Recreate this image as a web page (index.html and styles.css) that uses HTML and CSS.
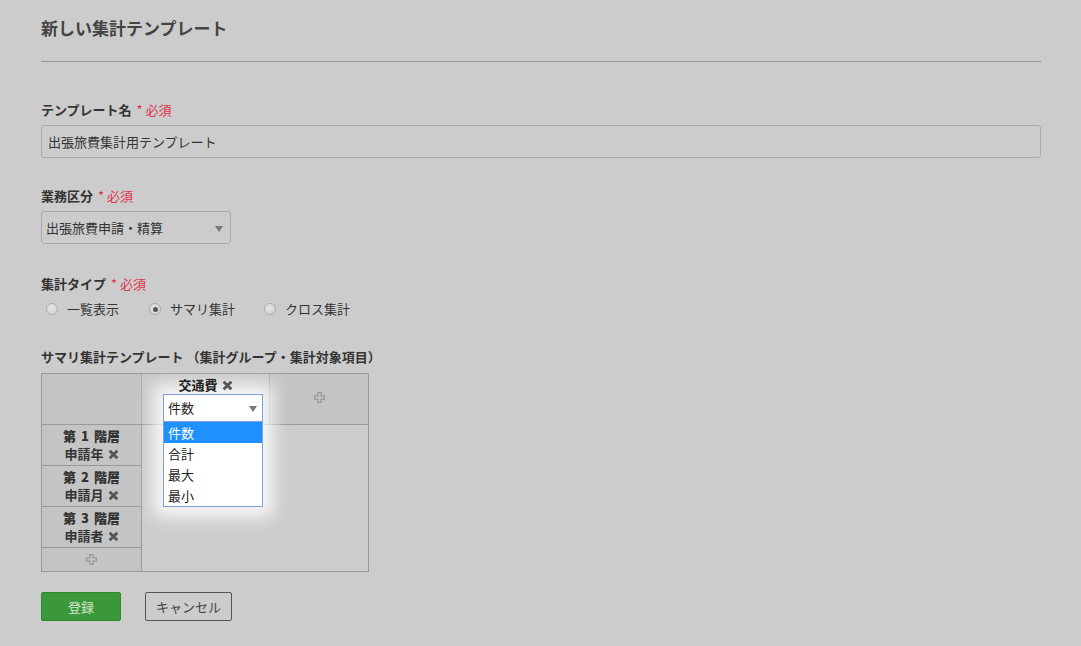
FILE: index.html
```html
<!DOCTYPE html>
<html lang="ja">
<head>
<meta charset="utf-8">
<link rel="stylesheet" href="styles.css">
</head>
<body>
<div class="page">
  <h1 class="title">新しい集計テンプレート</h1>
  <div class="rule"></div>

  <div class="field f-name">
    <div class="label">テンプレート名 <span class="req">* 必須</span></div>
    <div class="input">出張旅費集計用テンプレート</div>
  </div>

  <div class="field f-cat">
    <div class="label">業務区分 <span class="req">* 必須</span></div>
    <div class="select">出張旅費申請・精算<span class="caret"></span></div>
  </div>

  <div class="field f-type">
    <div class="label">集計タイプ <span class="req">* 必須</span></div>
    <div class="radios">
      <span class="radio r1"><span class="dot"></span>一覧表示</span>
      <span class="radio r2"><span class="dot on"></span>サマリ集計</span>
      <span class="radio r3"><span class="dot"></span>クロス集計</span>
    </div>
  </div>

  <div class="field f-grid">
    <div class="label">サマリ集計テンプレート （集計グループ・集計対象項目）</div>
    <div class="grid">
      <div class="c-corner"></div>
      <div class="c-head">
        <div class="head-name">交通費<svg class="x" viewBox="0 0 10 10"><path d="M1.5 1.5 L8.5 8.5 M8.5 1.5 L1.5 8.5"/></svg></div>
        <div class="combo">
          <div class="combo-box">件数<span class="caret"></span></div>
          <ul class="options">
            <li class="sel">件数</li>
            <li>合計</li>
            <li>最大</li>
            <li>最小</li>
          </ul>
        </div>
      </div>
      <div class="c-add"><svg class="plus" viewBox="0 0 12 12"><path d="M4.5 1.5 H7.5 V4.5 H10.5 V7.5 H7.5 V10.5 H4.5 V7.5 H1.5 V4.5 H4.5 Z"/></svg></div>
      <div class="rows">
        <div class="r-cell"><b>第 1 階層</b><span>申請年<svg class="x" viewBox="0 0 10 10"><path d="M1.5 1.5 L8.5 8.5 M8.5 1.5 L1.5 8.5"/></svg></span></div>
        <div class="r-cell"><b>第 2 階層</b><span>申請月<svg class="x" viewBox="0 0 10 10"><path d="M1.5 1.5 L8.5 8.5 M8.5 1.5 L1.5 8.5"/></svg></span></div>
        <div class="r-cell"><b>第 3 階層</b><span>申請者<svg class="x" viewBox="0 0 10 10"><path d="M1.5 1.5 L8.5 8.5 M8.5 1.5 L1.5 8.5"/></svg></span></div>
        <div class="r-add"><svg class="plus" viewBox="0 0 12 12"><path d="M4.5 1.5 H7.5 V4.5 H10.5 V7.5 H7.5 V10.5 H4.5 V7.5 H1.5 V4.5 H4.5 Z"/></svg></div>
      </div>
      <div class="body"></div>
    </div>
  </div>

  <div class="actions">
    <span class="btn btn-ok">登録</span>
    <span class="btn btn-cancel">キャンセル</span>
  </div>
</div>
</body>
</html>
```
FILE: styles.css
```css
html, body {
  margin: 0;
  padding: 0;
  background: #cccccc;
}
body {
  font-family: "Noto Sans CJK JP", "Noto Sans", sans-serif;
  font-size: 13px;
  color: #333;
}
.page {
  width: 1000px;
  padding: 16px 0 0 41px;
}
.title {
  margin: 0;
  font-size: 17px;
  line-height: 24px;
  font-weight: bold;
  color: #444;
}
.rule {
  margin-top: 21px;
  height: 1px;
  background: #999;
}
.label {
  font-weight: bold;
  line-height: 18px;
  color: #333;
}
.req {
  color: #e0314b;
  font-weight: normal;
  margin-left: 2px;
}
.f-name { margin-top: 39px; }
.input {
  margin-top: 6px;
  height: 31px;
  border: 1px solid #aaa;
  border-radius: 3px;
  box-sizing: content-box;
  padding-left: 6px;
  line-height: 31px;
  color: #333;
}
.f-cat { margin-top: 29px; }
.select {
  position: relative;
  margin-top: 6px;
  width: 184px;
  height: 31px;
  border: 1px solid #aaa;
  border-radius: 3px;
  padding-left: 4px;
  line-height: 31px;
}
.caret {
  position: absolute;
  right: 7px;
  top: 14px;
  width: 0;
  height: 0;
  border-left: 4px solid transparent;
  border-right: 4px solid transparent;
  border-top: 6px solid #777;
}
.f-type { margin-top: 31px; }
.radios {
  display: flex;
  margin-top: 7px;
  padding-left: 5px;
  line-height: 18px;
}
.radio {
  display: inline-flex;
  align-items: center;
}
.r1 { margin-right: 30px; }
.r2 { margin-right: 29px; }
.dot {
  width: 10px;
  height: 10px;
  border-radius: 50%;
  border: 1px solid #aaa;
  background: radial-gradient(circle at 40% 35%, #e4e4e4, #cfcfcf);
  margin-right: 9px;
  position: relative;
}
.dot.on::after {
  content: "";
  position: absolute;
  left: 2.5px;
  top: 2.5px;
  width: 5px;
  height: 5px;
  border-radius: 50%;
  background: #555;
}
.f-grid { margin-top: 30px; }
.grid {
  margin-top: 7px;
  display: grid;
  grid-template-columns: 100px 128px 98px;
  grid-template-rows: 51px auto;
  width: 326px;
  border: 1px solid #999;
  background: #cccccc;
}
.c-corner {
  background: #c4c4c4;
  border-right: 1px solid #aaa;
  border-bottom: 1px solid #999;
}
.c-head {
  position: relative;
  background: #c8c8c8;
  border-right: 1px solid #aaa;
  border-bottom: 1px solid #999;
  text-align: center;
}
.head-name {
  position: relative;
  z-index: 3;
  font-weight: bold;
  line-height: 18px;
  padding-top: 2px;
  color: #222;
}
.c-add {
  background: #c4c4c4;
  border-bottom: 1px solid #999;
  display: flex;
  align-items: center;
  justify-content: center;
  padding-bottom: 4px;
}
.combo {
  position: absolute;
  left: 21px;
  top: 20px;
  width: 100px;
  z-index: 2;
  box-shadow: 0 0 16px 10px rgba(255,255,255,0.85);
  text-align: left;
}
.combo-box {
  position: relative;
  height: 26px;
  background: #fff;
  border: 1px solid #7f9fd6;
  line-height: 26px;
  padding-left: 4px;
  color: #222;
}
.combo-box .caret {
  top: 11px;
  right: 5px;
}
.options {
  list-style: none;
  margin: 0;
  padding: 0;
  background: #fff;
  border: 1px solid #7f9fd6;
  border-top: none;
}
.options li {
  height: 21px;
  line-height: 21px;
  padding-left: 4px;
  color: #222;
}
.options li.sel {
  background: #1e90ff;
  color: #fff;
}
.rows {
  grid-column: 1;
  border-right: 1px solid #999;
}
.r-cell {
  height: 40px;
  border-bottom: 1px solid #999;
  background: #c4c4c4;
  display: flex;
  flex-direction: column;
  align-items: center;
  justify-content: center;
  line-height: 18px;
  font-weight: bold;
  color: #333;
}
.r-cell b {
  word-spacing: 2px;
}
.r-cell span {
  display: inline-flex;
  align-items: center;
}
.r-add {
  height: 23px;
  background: #c4c4c4;
  display: flex;
  align-items: center;
  justify-content: center;
}
.body {
  grid-column: 2 / 4;
  background: #cccccc;
}
.x {
  width: 11px;
  height: 11px;
  vertical-align: -1px;
  margin-left: 4px;
}
.x path {
  stroke: #555;
  stroke-width: 2.6;
  fill: none;
}
.plus {
  width: 13px;
  height: 13px;
}
.plus path {
  fill: none;
  stroke: #999;
  stroke-width: 1.2;
}
.actions {
  margin-top: 20px;
  display: flex;
  gap: 24px;
}
.btn {
  display: inline-flex;
  align-items: center;
  justify-content: center;
  height: 27px;
  border-radius: 2px;
  box-sizing: content-box;
}
.btn-ok {
  width: 78px;
  background: #3a983a;
  border: 1px solid #2f8a2f;
  color: #d6e9d0;
}
.btn-cancel {
  width: 85px;
  border: 1px solid #555;
  color: #444;
}
```
